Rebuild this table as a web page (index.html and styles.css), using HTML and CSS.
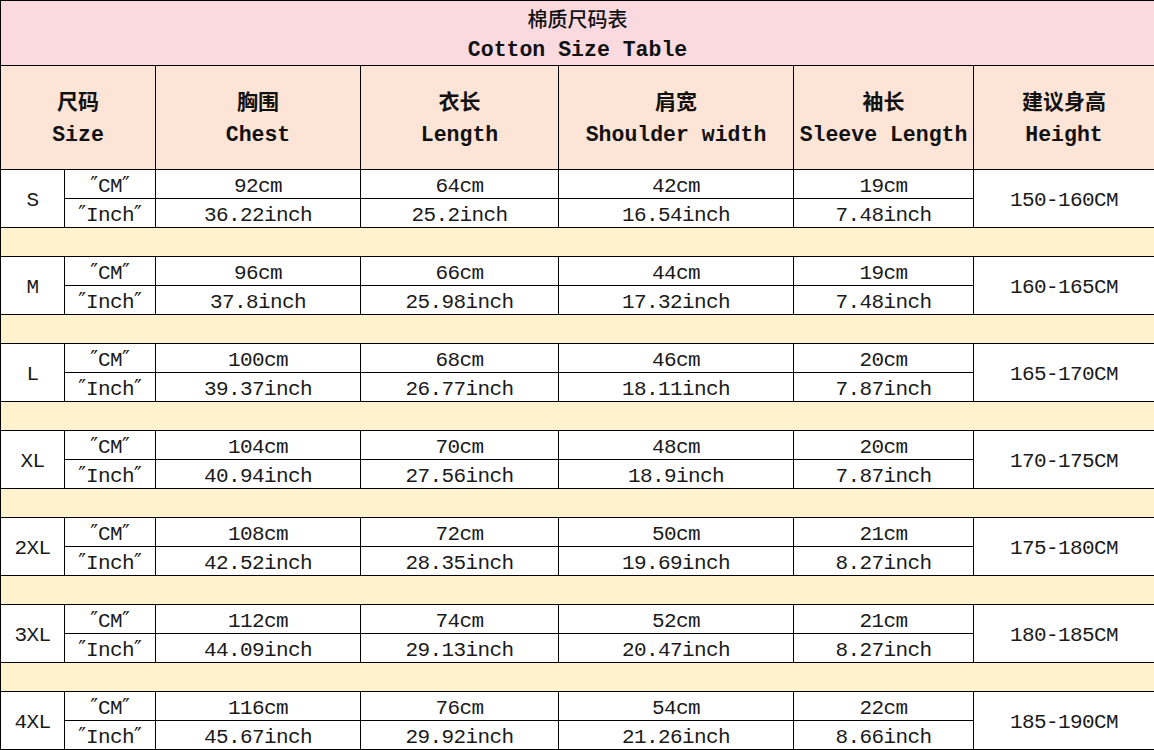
FILE: index.html
```html
<!DOCTYPE html>
<html>
<head>
<meta charset="utf-8">
<link rel="stylesheet" href="styles.css">
</head>
<body>
<table class="size-table">
  <colgroup>
    <col class="c-size"><col class="c-unit"><col class="c-chest"><col class="c-len"><col class="c-shoulder"><col class="c-sleeve"><col class="c-height">
  </colgroup>
  <tr class="title-row">
    <td colspan="7"><div class="cn">棉质尺码表</div><div class="en">Cotton Size Table</div></td>
  </tr>
  <tr class="head-row">
    <td colspan="2"><div class="cn">尺码</div><div class="en">Size</div></td>
    <td><div class="cn">胸围</div><div class="en">Chest</div></td>
    <td><div class="cn">衣长</div><div class="en">Length</div></td>
    <td><div class="cn">肩宽</div><div class="en">Shoulder width</div></td>
    <td><div class="cn">袖长</div><div class="en">Sleeve Length</div></td>
    <td><div class="cn">建议身高</div><div class="en">Height</div></td>
  </tr>

  <tr class="sub cm"><td rowspan="2" class="sz">S</td><td><span class="q">″</span>CM<span class="q">″</span></td><td>92cm</td><td>64cm</td><td>42cm</td><td>19cm</td><td rowspan="2" class="ht">150-160CM</td></tr>
  <tr class="sub in"><td><span class="q">″</span>Inch<span class="q">″</span></td><td>36.22inch</td><td>25.2inch</td><td>16.54inch</td><td>7.48inch</td></tr>
  <tr class="gap"><td colspan="7"></td></tr>

  <tr class="sub cm"><td rowspan="2" class="sz">M</td><td><span class="q">″</span>CM<span class="q">″</span></td><td>96cm</td><td>66cm</td><td>44cm</td><td>19cm</td><td rowspan="2" class="ht">160-165CM</td></tr>
  <tr class="sub in"><td><span class="q">″</span>Inch<span class="q">″</span></td><td>37.8inch</td><td>25.98inch</td><td>17.32inch</td><td>7.48inch</td></tr>
  <tr class="gap"><td colspan="7"></td></tr>

  <tr class="sub cm"><td rowspan="2" class="sz">L</td><td><span class="q">″</span>CM<span class="q">″</span></td><td>100cm</td><td>68cm</td><td>46cm</td><td>20cm</td><td rowspan="2" class="ht">165-170CM</td></tr>
  <tr class="sub in"><td><span class="q">″</span>Inch<span class="q">″</span></td><td>39.37inch</td><td>26.77inch</td><td>18.11inch</td><td>7.87inch</td></tr>
  <tr class="gap"><td colspan="7"></td></tr>

  <tr class="sub cm"><td rowspan="2" class="sz">XL</td><td><span class="q">″</span>CM<span class="q">″</span></td><td>104cm</td><td>70cm</td><td>48cm</td><td>20cm</td><td rowspan="2" class="ht">170-175CM</td></tr>
  <tr class="sub in"><td><span class="q">″</span>Inch<span class="q">″</span></td><td>40.94inch</td><td>27.56inch</td><td>18.9inch</td><td>7.87inch</td></tr>
  <tr class="gap"><td colspan="7"></td></tr>

  <tr class="sub cm"><td rowspan="2" class="sz">2XL</td><td><span class="q">″</span>CM<span class="q">″</span></td><td>108cm</td><td>72cm</td><td>50cm</td><td>21cm</td><td rowspan="2" class="ht">175-180CM</td></tr>
  <tr class="sub in"><td><span class="q">″</span>Inch<span class="q">″</span></td><td>42.52inch</td><td>28.35inch</td><td>19.69inch</td><td>8.27inch</td></tr>
  <tr class="gap"><td colspan="7"></td></tr>

  <tr class="sub cm"><td rowspan="2" class="sz">3XL</td><td><span class="q">″</span>CM<span class="q">″</span></td><td>112cm</td><td>74cm</td><td>52cm</td><td>21cm</td><td rowspan="2" class="ht">180-185CM</td></tr>
  <tr class="sub in"><td><span class="q">″</span>Inch<span class="q">″</span></td><td>44.09inch</td><td>29.13inch</td><td>20.47inch</td><td>8.27inch</td></tr>
  <tr class="gap"><td colspan="7"></td></tr>

  <tr class="sub cm"><td rowspan="2" class="sz">4XL</td><td><span class="q">″</span>CM<span class="q">″</span></td><td>116cm</td><td>76cm</td><td>54cm</td><td>22cm</td><td rowspan="2" class="ht">185-190CM</td></tr>
  <tr class="sub in"><td><span class="q">″</span>Inch<span class="q">″</span></td><td>45.67inch</td><td>29.92inch</td><td>21.26inch</td><td>8.66inch</td></tr>
</table>
</body>
</html>
```

FILE: styles.css
```css
html, body {
  margin: 0;
  padding: 0;
  background: #ffffff;
}
body {
  width: 1154px;
  height: 750px;
  overflow: hidden;
  font-family: "Liberation Mono", "Noto Sans CJK SC", monospace;
  color: #1a1a1a;
}
.size-table {
  border-collapse: collapse;
  table-layout: fixed;
  width: 1154px;
}
.size-table td {
  border: 1px solid #000;
  text-align: center;
  vertical-align: middle;
  padding: 0;
  font-size: 21px;
  letter-spacing: -0.6px;
  line-height: 24px;
  white-space: nowrap;
}
.c-size { width: 64px; }
.c-unit { width: 91px; }
.c-chest { width: 205px; }
.c-len { width: 198px; }
.c-shoulder { width: 235px; }
.c-sleeve { width: 180px; }
.c-height { width: 181px; }

.q {
  font-family: "DejaVu Sans", sans-serif;
  font-size: 21px;
  line-height: 16px;
  letter-spacing: 0;
}

.title-row td {
  height: 61px;
  padding-top: 3px;
  background: #fadadf;
}
.title-row .cn {
  font-family: "Noto Sans CJK SC", sans-serif;
  font-size: 20px;
  line-height: 26px;
  font-weight: 500;
  letter-spacing: 0;
  color: #111;
}
.title-row .en {
  font-size: 21.5px;
  line-height: 26px;
  font-weight: bold;
  letter-spacing: 0;
  color: #111;
  margin-top: 5px;
}
.head-row td {
  height: 103px;
  background: #fce4d6;
}
.head-row .cn {
  font-family: "Noto Sans CJK SC", sans-serif;
  font-size: 21px;
  line-height: 28px;
  font-weight: 700;
  letter-spacing: 0;
  color: #111;
}
.head-row .en {
  font-size: 21.5px;
  line-height: 28px;
  font-weight: bold;
  letter-spacing: 0;
  color: #111;
  margin-top: 7px;
}
.sub td {
  height: 22px;
  line-height: 22px;
  padding-top: 6px;
}
.sub td.sz, .sub td.ht {
  padding-top: 4px;
  line-height: 24px;
}
.gap td {
  height: 28px;
  background: #fff2cc;
}
```
